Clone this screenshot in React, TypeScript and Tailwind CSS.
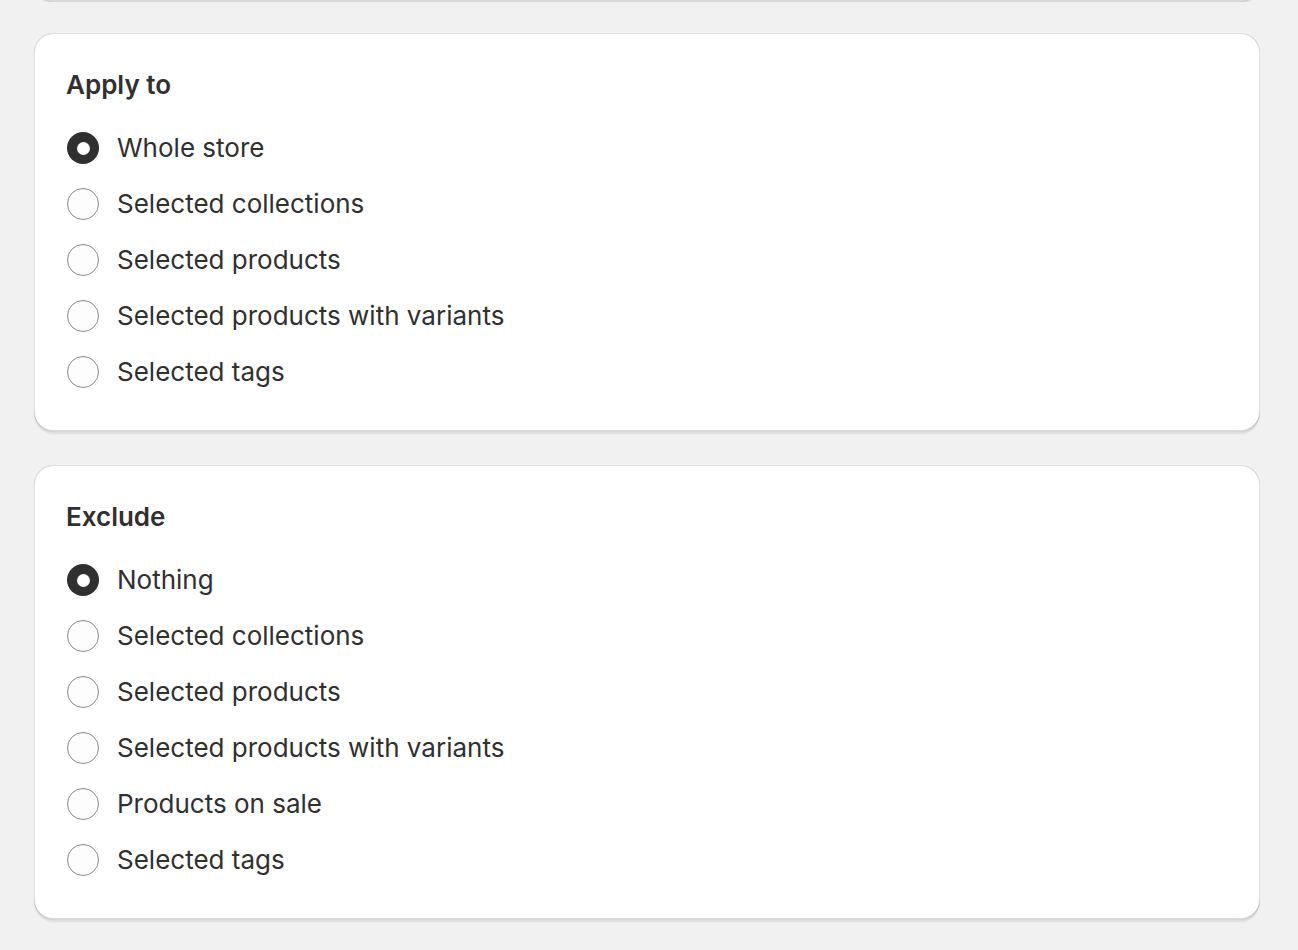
import React from "react";

const cardShadow =
  "shadow-[0_2px_1px_0_rgba(26,26,26,0.08),inset_0_1px_0_0_rgba(204,204,204,0.6),inset_0_-2px_0_0_rgba(0,0,0,0.15),inset_-1px_0_0_0_rgba(0,0,0,0.12),inset_1px_0_0_0_rgba(0,0,0,0.12)]";

function Radio({ checked }: { checked?: boolean }) {
  if (checked) {
    return (
      <span className="ml-[1px] flex h-[32px] w-[32px] shrink-0 items-center justify-center rounded-full bg-[#303030]">
        <span className="h-[13px] w-[13px] rounded-full bg-white" />
      </span>
    );
  }
  return <span className="ml-[1px] block h-[32px] w-[32px] shrink-0 rounded-full border border-[#8a8a8a] bg-[#fdfdfd]" />;
}

function Card({ title, options }: { title: string; options: string[] }) {
  return (
    <div className={`rounded-[20px] bg-white pl-[32px] pr-[32px] pt-[36px] pb-[32px] ${cardShadow}`}>
      <h2 className="text-[26px] font-semibold leading-[32px] text-[#303030]">{title}</h2>
      <div className="mt-[19px] flex flex-col">
        {options.map((o, i) => (
          <label key={o} className="flex h-[56px] items-center gap-[18px]">
            <Radio checked={i === 0} />
            <span className="text-[26px] leading-[32px] text-[#303030]">{o}</span>
          </label>
        ))}
      </div>
    </div>
  );
}

export default function App() {
  return (
    <div
      className="min-h-[950px] w-[1298px] bg-[#f1f1f1] pl-[34px] pr-[38px]"
      style={{ fontFamily: "Inter, 'Noto Sans', sans-serif" }}
    >
      <div className="h-[2px] overflow-hidden">
        <div className={`-mt-[40px] h-[42px] rounded-[20px] bg-white ${cardShadow}`} />
      </div>
      <div className="mt-[31px] flex flex-col gap-[33px]">
        <Card
          title="Apply to"
          options={[
            "Whole store",
            "Selected collections",
            "Selected products",
            "Selected products with variants",
            "Selected tags",
          ]}
        />
        <Card
          title="Exclude"
          options={[
            "Nothing",
            "Selected collections",
            "Selected products",
            "Selected products with variants",
            "Products on sale",
            "Selected tags",
          ]}
        />
      </div>
    </div>
  );
}
